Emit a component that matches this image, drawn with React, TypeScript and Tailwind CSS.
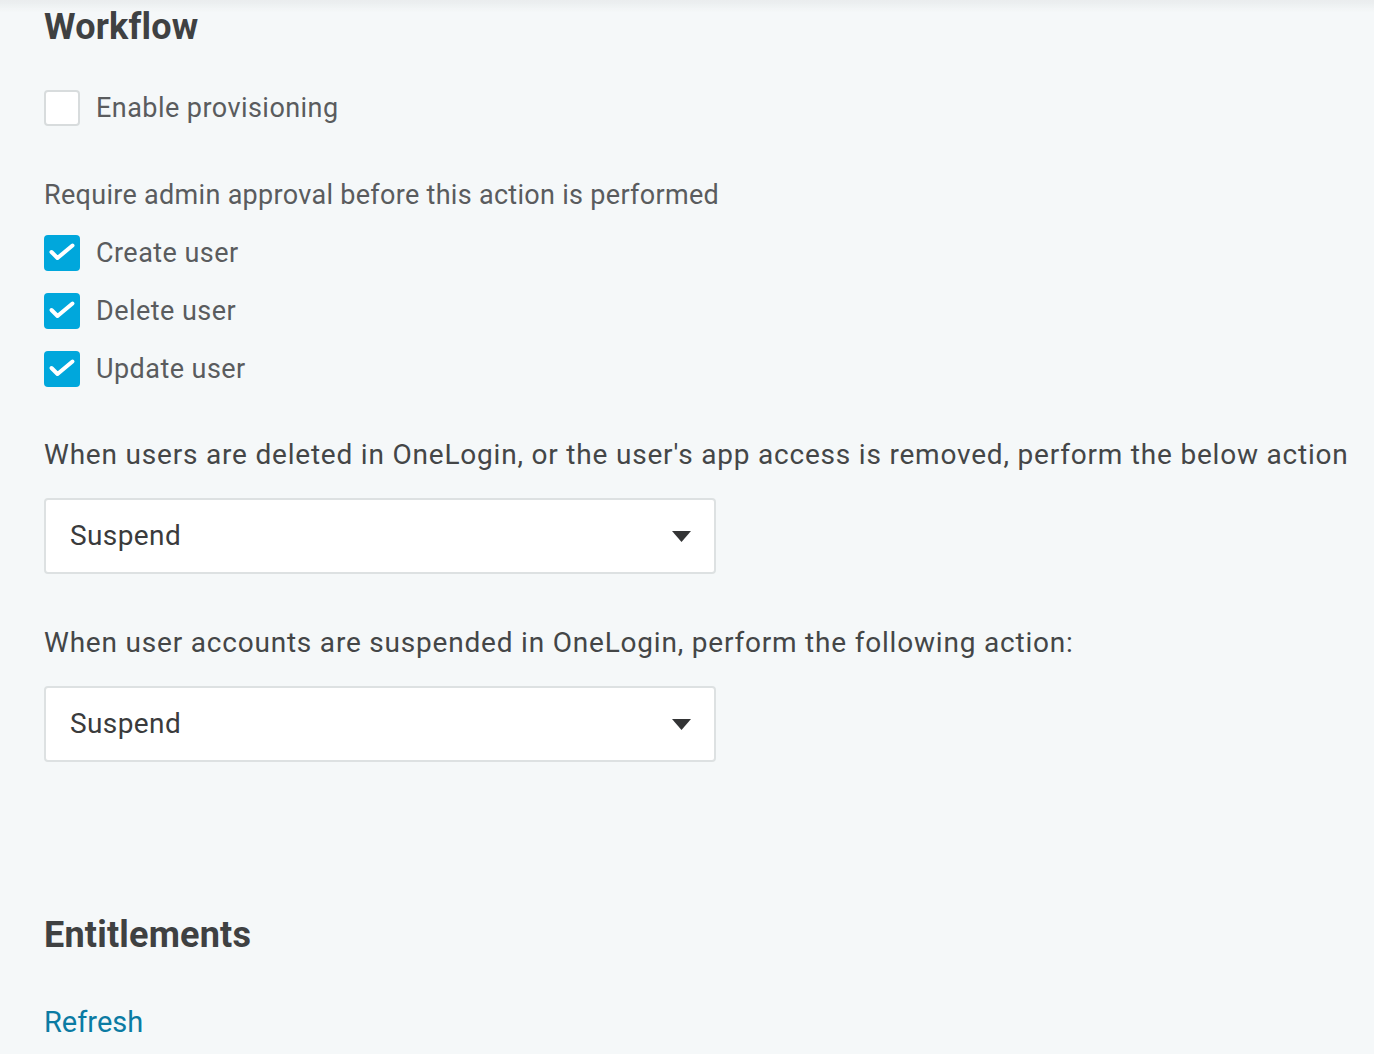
import { useState } from "react";

type CheckboxRowProps = {
  label: string;
  checked: boolean;
  onToggle: () => void;
};

function CheckboxRow({ label, checked, onToggle }: CheckboxRowProps) {
  return (
    <label className="flex h-9 cursor-pointer items-center gap-4" onClick={onToggle}>
      <span
        className={`flex h-9 w-9 shrink-0 items-center justify-center rounded-[4px] ${
          checked ? "bg-[#00a7dc]" : "border-2 border-[#d8dcdd] bg-white"
        }`}
      >
        {checked ? (
          <svg width="36" height="36" viewBox="0 0 36 36" fill="none">
            <path
              d="M7.5 17 L13.5 23 L28.5 10.5"
              stroke="white"
              strokeWidth="4"
              strokeLinecap="round"
              strokeLinejoin="round"
            />
          </svg>
        ) : null}
      </span>
      <span className="text-[27px] tracking-[0.45px] text-[#5a5c5e]">{label}</span>
    </label>
  );
}

function SelectBox({ value }: { value: string }) {
  return (
    <div className="flex h-[76px] w-[672px] items-center justify-between rounded-[4px] border-2 border-[#dde1e2] bg-white pl-6 pr-[23px]">
      <span className="text-[28px] tracking-[0.4px] text-[#3a3b3c]">{value}</span>
      <svg width="19" height="11" viewBox="0 0 19 11">
        <path d="M0 0 H19 L9.5 11 Z" fill="#333435" />
      </svg>
    </div>
  );
}

export default function App() {
  const [enableProvisioning, setEnableProvisioning] = useState(false);
  const [approvals, setApprovals] = useState({ create: true, remove: true, update: true });

  return (
    <div
      className="min-h-[1054px] w-full bg-[#f5f8f9] pl-11 text-[#4a4c4e]"
      style={{ fontFamily: "Roboto, 'Noto Sans', sans-serif" }}
    >
      <div className="pointer-events-none fixed inset-x-0 top-0 h-3 bg-gradient-to-b from-[#e9eced] to-transparent" />

      <h2 className="pt-[6px] text-[36px] font-bold leading-[42px] tracking-[0.2px] text-[#3f4142]">
        Workflow
      </h2>

      <div className="mt-[42px]">
        <CheckboxRow
          label="Enable provisioning"
          checked={enableProvisioning}
          onToggle={() => setEnableProvisioning(!enableProvisioning)}
        />
      </div>

      <p className="mt-[51px] text-[27px] leading-[36px] tracking-[0.3px] text-[#5a5c5e]">
        Require admin approval before this action is performed
      </p>

      <div className="mt-[22px] flex flex-col gap-[22px]">
        <CheckboxRow
          label="Create user"
          checked={approvals.create}
          onToggle={() => setApprovals({ ...approvals, create: !approvals.create })}
        />
        <CheckboxRow
          label="Delete user"
          checked={approvals.remove}
          onToggle={() => setApprovals({ ...approvals, remove: !approvals.remove })}
        />
        <CheckboxRow
          label="Update user"
          checked={approvals.update}
          onToggle={() => setApprovals({ ...approvals, update: !approvals.update })}
        />
      </div>

      <p className="mt-[50px] text-[28px] leading-[36px] tracking-[0.8px] text-[#444647]">
        When users are deleted in OneLogin, or the user's app access is removed, perform the below action
      </p>

      <div className="mt-[25px]">
        <SelectBox value="Suspend" />
      </div>

      <p className="mt-[51px] text-[28px] leading-[36px] tracking-[0.8px] text-[#444647]">
        When user accounts are suspended in OneLogin, perform the following action:
      </p>

      <div className="mt-[25px]">
        <SelectBox value="Suspend" />
      </div>

      <h2 className="mt-[152px] text-[36px] font-bold leading-[42px] tracking-[0.2px] text-[#3f4142]">
        Entitlements
      </h2>

      <a href="#" className="mt-[48px] block w-fit text-[29px] leading-[36px] text-[#0b7ba3]">
        Refresh
      </a>
    </div>
  );
}
